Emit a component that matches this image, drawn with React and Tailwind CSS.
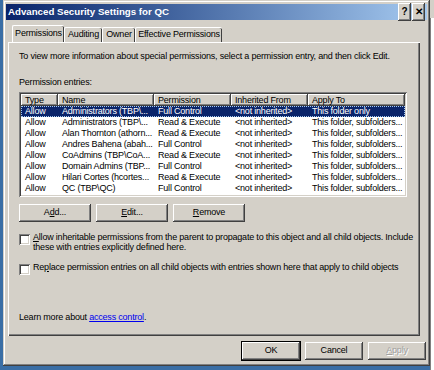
import React from 'react';

const raised =
  'bg-[#d4d0c8] shadow-[inset_-1px_-1px_#404040,inset_1px_1px_#ffffff,inset_-2px_-2px_#808080]';
const sunken =
  'shadow-[inset_1px_1px_#808080,inset_-1px_-1px_#ffffff,inset_2px_2px_#404040,inset_-2px_-2px_#d4d0c8]';

const rows = [
  ['Allow', 'Administrators (TBP\\...', 'Full Control', '<not inherited>', 'This folder only'],
  ['Allow', 'Administrators (TBP\\...', 'Read & Execute', '<not inherited>', 'This folder, subfolders...'],
  ['Allow', 'Alan Thornton (athorn...', 'Read & Execute', '<not inherited>', 'This folder, subfolders...'],
  ['Allow', 'Andres Bahena (abah...', 'Full Control', '<not inherited>', 'This folder, subfolders...'],
  ['Allow', 'CoAdmins (TBP\\CoA...', 'Read & Execute', '<not inherited>', 'This folder, subfolders...'],
  ['Allow', 'Domain Admins (TBP...', 'Full Control', '<not inherited>', 'This folder, subfolders...'],
  ['Allow', 'Hilari Cortes (hcortes...', 'Read & Execute', '<not inherited>', 'This folder, subfolders...'],
  ['Allow', 'QC (TBP\\QC)', 'Full Control', '<not inherited>', 'This folder, subfolders...'],
];

const cols = [
  { label: 'Type', w: 'w-[37px]' },
  { label: 'Name', w: 'w-[96px]' },
  { label: 'Permission', w: 'w-[77px]' },
  { label: 'Inherited From', w: 'w-[77px]' },
  { label: 'Apply To', w: 'w-[97px]' },
];

function Btn({ children, className = '', disabled }) {
  return (
    <div
      className={`${raised} flex items-center justify-center h-[18px] ${disabled ? 'text-[#a0a0a0]' : 'text-black'} ${className}`}
    >
      {children}
    </div>
  );
}

function Check({ children }) {
  return (
    <div className="flex items-start gap-[3px]">
      <div className={`mt-[2px] w-[11px] h-[11px] shrink-0 bg-white ${sunken}`} />
      <div className="leading-[10px] whitespace-nowrap">{children}</div>
    </div>
  );
}

export default function App() {
  return (
    <div
      className="w-[434px] h-[370px] bg-[#3a6ea5] flex text-[9px] tracking-[-0.2px] text-black overflow-hidden"
      style={{ fontFamily: '"Liberation Sans", Arial, sans-serif' }}
    >
      <div className="w-[3px] shrink-0" />
      <div className="w-[427px] h-[366px] shrink-0 flex flex-col p-[3px] bg-[#d4d0c8] shadow-[inset_-1px_-1px_#404040,inset_1px_1px_#d4d0c8,inset_-2px_-2px_#808080,inset_2px_2px_#ffffff]">
        {/* title bar */}
        <div className="h-[16px] mt-[1px] flex items-center justify-between pl-[2px] pr-[2px] bg-gradient-to-r from-[#0a246a] to-[#a6caf0]">
          <span className="text-white font-bold text-[9.7px] tracking-normal">
            Advanced Security Settings for QC
          </span>
          <div className="flex gap-[1px]">
            <Btn className="w-[13px] h-[12px] font-bold text-[10px] leading-none">?</Btn>
            <Btn className="w-[13px] h-[12px] text-[10px] leading-none font-bold">✕</Btn>
          </div>
        </div>

        {/* tabs */}
        <div className="flex items-end pl-[6px] mt-[6px] h-[16px] relative z-10">
          <div className="w-[52px] h-[17px] bg-[#d4d0c8] border-t border-l border-white shadow-[inset_-1px_0_#404040] rounded-t-[2px] flex items-center justify-center">
            Permissions
          </div>
          <div className="w-[38px] h-[15px] border-t border-l border-white shadow-[inset_-1px_0_#404040] rounded-t-[2px] flex items-center justify-center">
            Auditing
          </div>
          <div className="w-[33px] h-[15px] border-t border-l border-white shadow-[inset_-1px_0_#404040] rounded-t-[2px] flex items-center justify-center">
            Owner
          </div>
          <div className="w-[87px] h-[15px] border-t border-l border-white shadow-[inset_-1px_0_#404040] rounded-t-[2px] flex items-center justify-center">
            Effective Permissions
          </div>
        </div>

        {/* panel */}
        <div className="ml-[2px] w-[412px] h-[294px] border-t border-l border-white shadow-[inset_-1px_-1px_#404040,inset_-2px_-2px_#808080] flex flex-col pl-[10px] pt-[7px]">
          <div className="leading-[12px] whitespace-nowrap">
            To view more information about special permissions, select a permission entry, and then click Edit.
          </div>
          <div className="mt-[14px] leading-[12px]">Permission entries:</div>
          <div className={`mt-[4px] w-[388px] h-[105px] bg-white p-[2px] ${sunken}`}>
            <div className="flex h-[12px]">
              {cols.map((c) => (
                <div
                  key={c.label}
                  className={`${c.w} ${raised} px-[4px] flex items-center leading-none whitespace-nowrap`}
                >
                  {c.label}
                </div>
              ))}
            </div>
            {rows.map((r, i) => (
              <div
                key={i}
                className={`flex h-[11px] items-center leading-none ${i === 0 ? 'bg-[#0a246a] text-white outline outline-dotted outline-1 -outline-offset-1 outline-[#a6caf0]' : ''}`}
              >
                {r.map((cell, j) => (
                  <div key={j} className={`${cols[j].w} px-[4px] whitespace-nowrap overflow-hidden`}>
                    {cell}
                  </div>
                ))}
              </div>
            ))}
          </div>

          <div className="flex gap-[5px] mt-[7px]">
            <Btn className="w-[72px]">
              <span>
                A<span className="underline">d</span>d...
              </span>
            </Btn>
            <Btn className="w-[72px]">
              <span>
                <span className="underline">E</span>dit...
              </span>
            </Btn>
            <Btn className="w-[72px]">
              <span>
                <span className="underline">R</span>emove
              </span>
            </Btn>
          </div>

          <div className="mt-[10px]">
            <Check>
              <span className="underline">A</span>llow inheritable permissions from the parent to propagate to this object and all child objects. Include
              <br />
              these with entries explicitly defined here.
            </Check>
          </div>
          <div className="mt-[10px]">
            <Check>
              Re<span className="underline">p</span>lace permission entries on all child objects with entries shown here that apply to child objects
            </Check>
          </div>

          <div className="mt-[36px] leading-[12px]">
            Learn more about <span className="text-[#0000ee] underline">access control</span>.
          </div>
        </div>

        {/* bottom buttons */}
        <div className="flex justify-end gap-[5px] mt-[6px] pr-[1px]">
          <Btn className="w-[58px] outline outline-1 outline-black">OK</Btn>
          <Btn className="w-[58px]">Cancel</Btn>
          <Btn className="w-[58px]" disabled>
            <span className="[text-shadow:1px_1px_#ffffff]">
              <span className="underline">A</span>pply
            </span>
          </Btn>
        </div>
      </div>
      <div className="w-[4px] shrink-0 flex flex-col">
        <div className="h-[18px] bg-[#d4d0c8]" />
        <div className="flex-1 bg-white border-l border-[#808080]" />
      </div>
    </div>
  );
}
